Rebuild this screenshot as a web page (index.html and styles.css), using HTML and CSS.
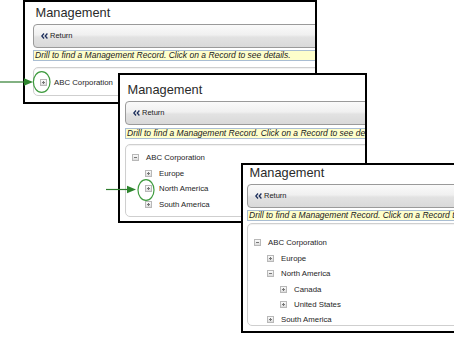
FILE: index.html
```html
<!DOCTYPE html>
<html>
<head>
<meta charset="utf-8">
<link rel="stylesheet" href="styles.css">
</head>
<body>
<div class="desk">
  <section class="shot shot-1">
    <div class="pg">
      <h1 class="title">Management</h1>
      <div class="toolbar"><span class="back"><svg class="chev" width="7" height="6" viewBox="0 0 7 6"><polyline points="3,0.5 0.8,3 3,5.5"/><polyline points="6.4,0.5 4.2,3 6.4,5.5"/></svg>Return</span></div>
      <p class="hint">Drill to find a Management Record. Click on a Record to see details.</p>
      <div class="tree">
        <div class="node"><span class="tg plus"></span><span class="lbl">ABC Corporation</span></div>
      </div>
    </div>
  </section>

  <section class="shot shot-2">
    <div class="pg">
      <h1 class="title">Management</h1>
      <div class="toolbar"><span class="back"><svg class="chev" width="7" height="6" viewBox="0 0 7 6"><polyline points="3,0.5 0.8,3 3,5.5"/><polyline points="6.4,0.5 4.2,3 6.4,5.5"/></svg>Return</span></div>
      <p class="hint">Drill to find a Management Record. Click on a Record to see details.</p>
      <div class="tree">
        <div class="node"><span class="tg minus"></span><span class="lbl">ABC Corporation</span></div>
        <div class="kids">
          <div class="node"><span class="tg plus"></span><span class="lbl">Europe</span></div>
          <div class="node"><span class="tg plus"></span><span class="lbl">North America</span></div>
          <div class="node"><span class="tg plus"></span><span class="lbl">South America</span></div>
        </div>
      </div>
    </div>
  </section>

  <section class="shot shot-3">
    <div class="pg">
      <h1 class="title">Management</h1>
      <div class="toolbar"><span class="back"><svg class="chev" width="7" height="6" viewBox="0 0 7 6"><polyline points="3,0.5 0.8,3 3,5.5"/><polyline points="6.4,0.5 4.2,3 6.4,5.5"/></svg>Return</span></div>
      <p class="hint">Drill to find a Management Record. Click on a Record to see details.</p>
      <div class="tree">
        <div class="node"><span class="tg minus"></span><span class="lbl">ABC Corporation</span></div>
        <div class="kids">
          <div class="node"><span class="tg plus"></span><span class="lbl">Europe</span></div>
          <div class="node"><span class="tg minus"></span><span class="lbl">North America</span></div>
          <div class="kids">
            <div class="node"><span class="tg plus"></span><span class="lbl">Canada</span></div>
            <div class="node"><span class="tg plus"></span><span class="lbl">United States</span></div>
          </div>
          <div class="node"><span class="tg plus"></span><span class="lbl">South America</span></div>
        </div>
      </div>
    </div>
  </section>

  <svg class="marks" width="454" height="338" viewBox="0 0 454 338">
    <line x1="0" y1="82" x2="26" y2="82" class="arrow-line"/>
    <polygon points="24,78.3 33,82 24,85.7" class="arrow-head"/>
    <ellipse cx="41.7" cy="82" rx="8.3" ry="10.4" class="ring"/>
    <line x1="106" y1="189.5" x2="129" y2="189.5" class="arrow-line"/>
    <polygon points="127,185.8 136,189.5 127,193.2" class="arrow-head"/>
    <ellipse cx="146" cy="190" rx="8" ry="10.4" class="ring"/>
  </svg>
</div>
</body>
</html>
```

FILE: styles.css
```css
html, body {
  margin: 0;
  padding: 0;
  background: #fff;
}
body {
  width: 454px;
  height: 338px;
  overflow: hidden;
  font-family: "Liberation Sans", Arial, sans-serif;
  color: #222;
}
.desk {
  position: relative;
  width: 454px;
  height: 338px;
  overflow: hidden;
}
.shot {
  position: absolute;
  box-sizing: border-box;
  border: 2px solid #000;
  background: #fff;
  overflow: hidden;
}
.shot-1 { left: 23px; top: 0; width: 294px; height: 104px; --pt: 4.2px; --pl: 8px; --hg: 2px; --tg: 6px; --tp: 7.2px; --th: 29px; }
.shot-2 { left: 118px; top: 73px; width: 249px; height: 150px; --pt: 8.1px; --pl: 5px; --hg: 3px; --tg: 5px; --tp: 5.3px; --th: 73px; }
.shot-3 { left: 241px; top: 163px; width: 300px; height: 170px; --pt: 1.2px; --pl: 4px; --hg: 2px; --tg: 2px; --tp: 11.3px; --th: 103px; }

.pg {
  width: 560px;
  padding: var(--pt) 0 0 var(--pl);
}
.title {
  margin: 0 0 3.8px 2.5px;
  font-size: 12.8px;
  line-height: 14px;
  font-weight: normal;
  color: #2a2a2a;
}
.toolbar {
  box-sizing: border-box;
  height: 24px;
  border: 1px solid #9a9a9a;
  border-radius: 4px;
  background: linear-gradient(#fafafa 0%, #f0f0f0 45%, #e2e2e2 55%, #d9d9d9 100%);
  display: flex;
  align-items: center;
  padding-left: 7px;
}
.back {
  display: flex;
  align-items: center;
  gap: 2px;
  font-size: 7.5px;
  color: #1b1b1b;
}
.chev polyline {
  fill: none;
  stroke: #1d2f5c;
  stroke-width: 1.3;
}
.hint {
  box-sizing: border-box;
  margin: var(--hg) 0 0 0;
  height: 11px;
  border: 1px solid #a9bdd2;
  background: #fefecb;
  font-size: 8.5px;
  line-height: 9px;
  font-style: italic;
  color: #222;
  padding-left: 1px;
  white-space: nowrap;
}
.tree {
  box-sizing: border-box;
  margin-top: var(--tg);
  height: var(--th);
  border: 1px solid #cfcfcf;
  border-radius: 5px;
  padding: var(--tp) 0 0 6px;
  box-shadow: inset 0 1px 1px rgba(0,0,0,0.06);
}
.node {
  display: flex;
  align-items: center;
  height: 15.4px;
  gap: 7px;
}
.kids {
  padding-left: 13px;
}
.lbl {
  font-size: 7.8px;
  color: #1e1e1e;
  white-space: nowrap;
}
.tg {
  position: relative;
  box-sizing: border-box;
  width: 7px;
  height: 7px;
  border: 1px solid #b8b8b8;
  background: linear-gradient(#fbfbfb, #dcdcdc);
  flex: none;
}
.tg::before {
  content: "";
  position: absolute;
  left: 1px;
  top: 2px;
  width: 3px;
  height: 1px;
  background: #777;
}
.tg.plus::after {
  content: "";
  position: absolute;
  left: 2px;
  top: 1px;
  width: 1px;
  height: 3px;
  background: #777;
}
.marks {
  position: absolute;
  left: 0;
  top: 0;
  pointer-events: none;
}
.arrow-line {
  stroke: #2e7d2e;
  stroke-width: 1.2;
}
.arrow-head {
  fill: #2e852e;
}
.ring {
  fill: none;
  stroke: #3f9b3f;
  stroke-width: 1.2;
}
```
